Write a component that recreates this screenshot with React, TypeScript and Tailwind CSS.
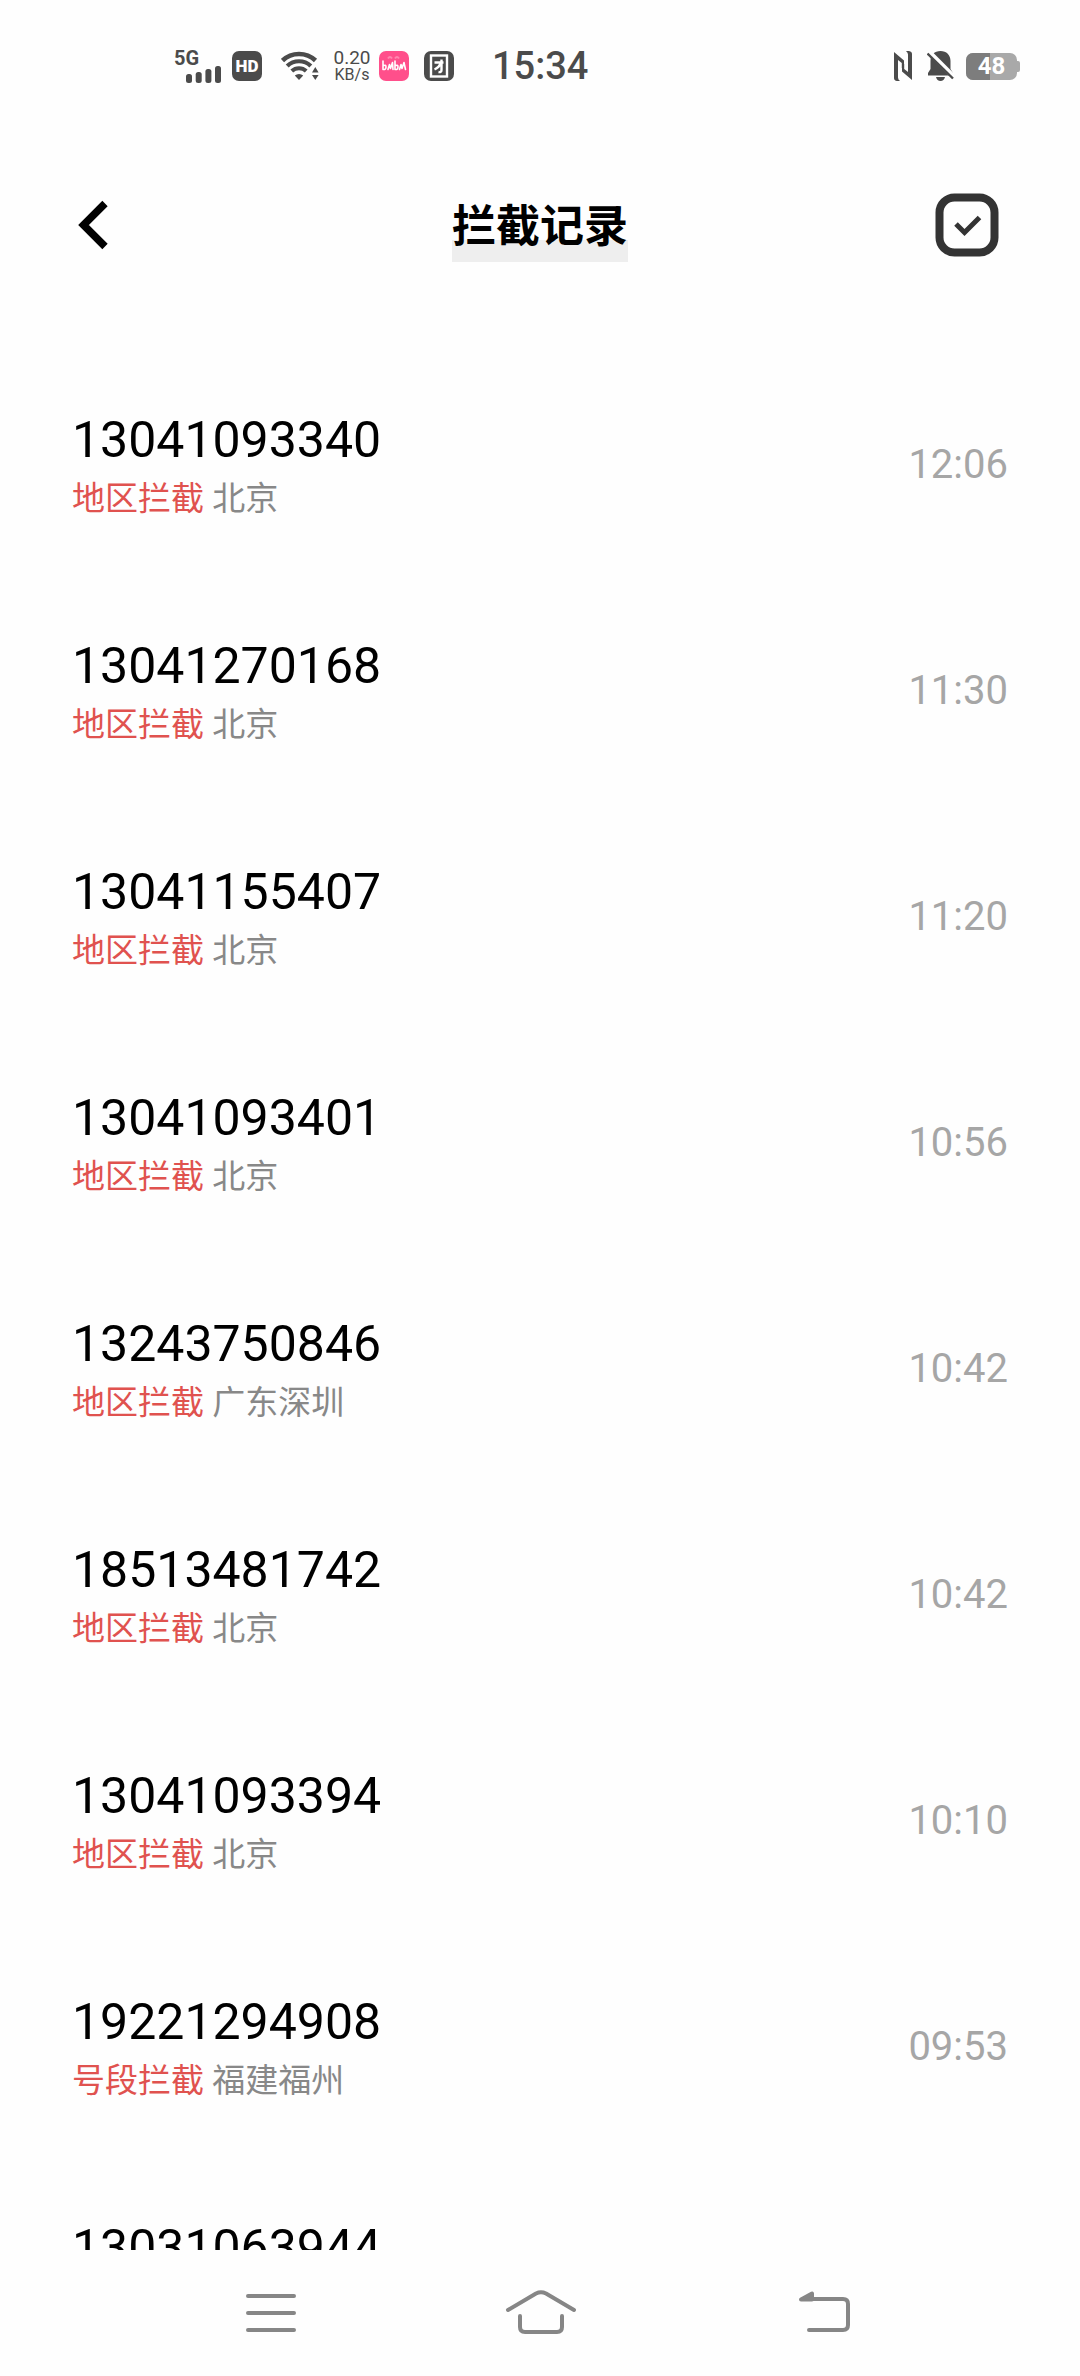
import { FC, ReactNode } from "react"

interface CallRecord {
  number: string
  reason: string
  region: string
  time: string
}

const records: CallRecord[] = [
  { number: "13041093340", reason: "地区拦截", region: "北京", time: "12:06" },
  { number: "13041270168", reason: "地区拦截", region: "北京", time: "11:30" },
  { number: "13041155407", reason: "地区拦截", region: "北京", time: "11:20" },
  { number: "13041093401", reason: "地区拦截", region: "北京", time: "10:56" },
  { number: "13243750846", reason: "地区拦截", region: "广东深圳", time: "10:42" },
  { number: "18513481742", reason: "地区拦截", region: "北京", time: "10:42" },
  { number: "13041093394", reason: "地区拦截", region: "北京", time: "10:10" },
  { number: "19221294908", reason: "号段拦截", region: "福建福州", time: "09:53" },
  { number: "13031063944", reason: "", region: "", time: "" },
]

const SignalIcon: FC = () => (
  <div className="flex flex-col">
    <span className="text-[20px] leading-4 font-bold">5G</span>
    <svg width="36" height="17" viewBox="0 0 36 17" className="ml-3" fill="currentColor">
      <rect x="0" y="8" width="6" height="9" rx="2.5" />
      <rect x="9.7" y="6" width="6" height="11" rx="2.5" />
      <rect x="19.4" y="3" width="6" height="14" rx="2.5" />
      <rect x="29" y="0" width="6" height="17" rx="2.5" />
    </svg>
  </div>
)

const HdIcon: FC = () => (
  <span className="flex size-[30px] items-center justify-center rounded-[7px] bg-[#4b4b4b] text-[17px] leading-none font-black text-white">
    HD
  </span>
)

const WifiIcon: FC = () => (
  <svg width="38" height="30" viewBox="0 0 38 30" fill="none" stroke="currentColor">
    <path d="M1.5 9.5a24 24 0 0 1 33 0" strokeWidth="4.6" />
    <path d="M6.2 15a17 17 0 0 1 23.6 0" strokeWidth="4.2" />
    <path d="M10.8 20a10.5 10.5 0 0 1 14.4 0" strokeWidth="4" />
    <path d="M13.8 24.6a6 6 0 0 1 8.4 0L18 29Z" fill="currentColor" stroke="none" />
    <path d="M31 21.5 34.3 16l3.3 5.5ZM31 24l3.3 5 3.3-5Z" fill="currentColor" stroke="none" />
  </svg>
)

const LalaIcon: FC = () => (
  <svg width="30" height="30" viewBox="0 0 30 30" fill="none">
    <rect width="30" height="30" rx="7" fill="#ff4f8b" />
    <path d="M9 7.500q2-3 4 0M16 7.500q2-3 4 0" stroke="#ff86ae" strokeWidth="2" />
    <path
      d="M4 10v8.500M4 15q3-2 3 1t-3 2.500M9 18.500l1.500-5 1 4 2-6 .5 7M16 10v8.500M16 15q3-2 3 1t-3 2.500M20.500 18.500l1.500-5 1 4 2-6 1.500 7"
      stroke="#fff"
      strokeWidth="1.600"
      strokeLinecap="round"
      strokeLinejoin="round"
    />
  </svg>
)

const CardIcon: FC = () => (
  <svg width="30" height="30" viewBox="0 0 30 30" fill="none">
    <rect width="30" height="30" rx="7" fill="#4b4b4b" />
    <rect x="7" y="4.500" width="16" height="21" stroke="#fff" strokeWidth="2.400" />
    <path d="M10.500 11.500h9M17.500 8.500v10.500q0 2.500-3 2M17 12q-2 4.500-6.500 6.500" stroke="#fff" strokeWidth="2.400" />
  </svg>
)

const NfcIcon: FC = () => (
  <svg width="18" height="30" viewBox="0 0 18 30" fill="currentColor">
    <path d="M0 1 10 9.500V19l-2.200-2v-5L4 9v17.500q0 2 2 3.500H3q-3-.5-3-3Z" />
    <path d="M18 29 8 20.500V11l2.200 2v5l3.800 3V3.500q0-2-2-3.500h3q3 .5 3 3Z" />
  </svg>
)

const BellOffIcon: FC = () => (
  <svg width="27" height="30" viewBox="0 0 27 30">
    <path d="M13.500 0C7.500 0 3.500 4 3.500 10v8L1 22v2.500h25V22l-2.500-4v-8C23.500 4 19.500 0 13.500 0ZM9 26h9q-1 4-4.500 4T9 26Z" fill="currentColor" />
    <path d="M0-1 28 27" stroke="#fff" strokeWidth="5" />
    <path d="M.5 2.500 26 27.500" stroke="currentColor" strokeWidth="2.400" />
  </svg>
)

const Battery: FC<{ level: number }> = ({ level }) => (
  <div className="flex items-center">
    <div className="relative flex h-[27px] w-[51px] items-center justify-center overflow-hidden rounded-[7px] bg-[#a9a9a9]">
      <span className="absolute inset-y-0 left-0 bg-[#7d7d7d]" style={{ width: `${level}%` }} />
      <span className="relative text-[24px] leading-none font-bold text-white">{level}</span>
    </div>
    <span className="h-[11px] w-[3px] rounded-r-[2px] bg-[#a9a9a9]" />
  </div>
)

const StatusBar: FC = () => (
  <div className="flex h-[132px] shrink-0 items-center justify-between pr-[60px] pl-[174px] text-[#4b4b4b]">
    <div className="flex items-center">
      <SignalIcon />
      <div className="ml-[10px]">
        <HdIcon />
      </div>
      <div className="ml-[19px]">
        <WifiIcon />
      </div>
      <div className="ml-[15px] flex w-[36px] flex-col items-center">
        <span className="text-[19px] leading-[18px]">0.20</span>
        <span className="text-[16px] leading-4">KB/s</span>
      </div>
      <div className="ml-[9px] flex gap-[15px]">
        <LalaIcon />
        <CardIcon />
      </div>
      <span className="ml-[38px] text-[38px] leading-none font-medium">15:34</span>
    </div>
    <div className="flex items-center">
      <NfcIcon />
      <div className="mr-3 ml-[15px]">
        <BellOffIcon />
      </div>
      <Battery level={48} />
    </div>
  </div>
)

const Header: FC = () => (
  <header className="grid h-[186px] shrink-0 grid-cols-3 items-center px-[76px]">
    <button type="button" aria-label="返回" className="justify-self-start">
      <svg width="34" height="50" viewBox="0 0 34 50" fill="none" stroke="#000" strokeWidth="7.500">
        <path d="M29 3.500 7.500 25 29 46.500" />
      </svg>
    </button>
    <h1 className="justify-self-center bg-linear-to-t from-[#eeeeee] from-30% to-transparent to-30% pt-1 text-[44px] leading-[70px] font-bold text-black">
      拦截记录
    </h1>
    <button type="button" aria-label="选择" className="justify-self-end">
      <svg width="70" height="64" viewBox="0 0 70 64" fill="none" stroke="#333">
        <rect x="5.500" y="4.500" width="55" height="55" rx="15" strokeWidth="8" />
        <path d="m22 31 8.500 8.500 15-15" strokeWidth="5" />
      </svg>
    </button>
  </header>
)

const RecordRow: FC<{ record: CallRecord }> = ({ record }) => (
  <li className="flex h-[226px] items-center justify-between">
    <div>
      <p className="text-[50px] leading-[68px] text-black">{record.number}</p>
      <p className="h-[50px] text-[33px] leading-[50px] text-[#888888]">
        <span className="text-[#e0524f]">{record.reason}</span> {record.region}
      </p>
    </div>
    <time className="text-[40px] leading-none text-[#a6a6a6]">{record.time}</time>
  </li>
)

const NavButton: FC<{ label: string; children: ReactNode }> = ({ label, children }) => (
  <button type="button" aria-label={label} className="flex items-center justify-center">
    <svg width="80" height="60" viewBox="0 0 80 60" fill="none" stroke="#868686" strokeWidth="4" strokeLinecap="round" strokeLinejoin="round">
      {children}
    </svg>
  </button>
)

const NavBar: FC = () => (
  <nav className="grid h-[126px] shrink-0 grid-cols-3 px-[12.5%]">
    <NavButton label="最近任务">
      <path d="M18 13h46M18 30h46M18 47h46" />
    </NavButton>
    <NavButton label="主屏幕">
      <path d="M8 27 36 10.500q5-2.500 10 0L74 27" />
      <path d="M20 33v11q0 5 5 5h32q5 0 5-5V33" />
    </NavButton>
    <NavButton label="后退">
      <path d="M38 16h35q5 0 5 5v21q0 5-5 5H39" />
      <path d="M31 16.500 42 10.500v6Z" fill="#868686" />
    </NavButton>
  </nav>
)

export default function App() {
  return (
    <div className="flex h-screen flex-col bg-[#fefefe] font-['Roboto','Noto_Sans_CJK_SC',sans-serif]">
      <StatusBar />
      <Header />
      <ul className="min-h-0 flex-1 overflow-y-auto px-[72px] pt-[34px] [scrollbar-width:none]">
        {records.map((record) => (
          <RecordRow key={record.number} record={record} />
        ))}
      </ul>
      <NavBar />
    </div>
  )
}
